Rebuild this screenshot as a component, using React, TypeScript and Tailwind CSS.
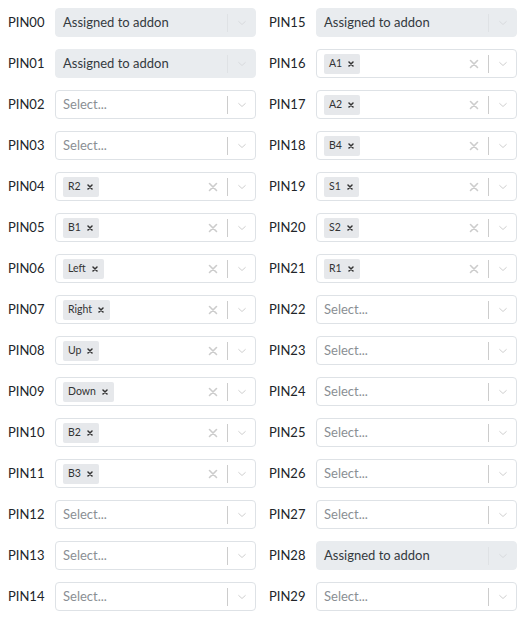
import React from "react";

type Pin = { name: string; kind: "addon" | "empty" | "tag"; tag?: string };

const left: Pin[] = [
  { name: "PIN00", kind: "addon" },
  { name: "PIN01", kind: "addon" },
  { name: "PIN02", kind: "empty" },
  { name: "PIN03", kind: "empty" },
  { name: "PIN04", kind: "tag", tag: "R2" },
  { name: "PIN05", kind: "tag", tag: "B1" },
  { name: "PIN06", kind: "tag", tag: "Left" },
  { name: "PIN07", kind: "tag", tag: "Right" },
  { name: "PIN08", kind: "tag", tag: "Up" },
  { name: "PIN09", kind: "tag", tag: "Down" },
  { name: "PIN10", kind: "tag", tag: "B2" },
  { name: "PIN11", kind: "tag", tag: "B3" },
  { name: "PIN12", kind: "empty" },
  { name: "PIN13", kind: "empty" },
  { name: "PIN14", kind: "empty" },
];

const right: Pin[] = [
  { name: "PIN15", kind: "addon" },
  { name: "PIN16", kind: "tag", tag: "A1" },
  { name: "PIN17", kind: "tag", tag: "A2" },
  { name: "PIN18", kind: "tag", tag: "B4" },
  { name: "PIN19", kind: "tag", tag: "S1" },
  { name: "PIN20", kind: "tag", tag: "S2" },
  { name: "PIN21", kind: "tag", tag: "R1" },
  { name: "PIN22", kind: "empty" },
  { name: "PIN23", kind: "empty" },
  { name: "PIN24", kind: "empty" },
  { name: "PIN25", kind: "empty" },
  { name: "PIN26", kind: "empty" },
  { name: "PIN27", kind: "empty" },
  { name: "PIN28", kind: "addon" },
  { name: "PIN29", kind: "empty" },
];

function Chevron({ faint }: { faint?: boolean }) {
  return (
    <svg width="12" height="12" viewBox="0 0 20 20" className={faint ? "text-[#d6d8db]" : "text-[#cccccc]"}>
      <path
        d="M4.5 7.5 L10 12.5 L15.5 7.5"
        fill="none"
        stroke="currentColor"
        strokeWidth="1.6"
        strokeLinecap="round"
        strokeLinejoin="round"
      />
    </svg>
  );
}

function Clear() {
  return (
    <svg width="10" height="10" viewBox="0 0 10 10" className="text-[#cccccc]">
      <path d="M1.5 1.5 L8.5 8.5 M8.5 1.5 L1.5 8.5" stroke="currentColor" strokeWidth="1.6" strokeLinecap="round" />
    </svg>
  );
}

function TagX() {
  return (
    <svg width="6" height="6" viewBox="0 0 6 6" className="text-[#333333]">
      <path d="M1 1 L5 5 M5 1 L1 5" stroke="currentColor" strokeWidth="1.5" strokeLinecap="round" />
    </svg>
  );
}

function Row({ pin }: { pin: Pin }) {
  const disabled = pin.kind === "addon";
  return (
    <div className="flex items-center h-[29px]">
      <div className="w-[48px] pl-px text-[13px] text-[#212529]">{pin.name}</div>
      <div
        className={
          disabled
            ? "flex-1 h-[29px] flex items-center rounded-[4px] border border-[#e9ecef] bg-[#e9ecef]"
            : "flex-1 h-[29px] flex items-center rounded-[4px] border border-[#dee2e6] bg-white"
        }
      >
        <div className="flex-1 flex items-center pl-[7px]">
          {pin.kind === "addon" && <span className="text-[13px] text-[#343a40]">Assigned to addon</span>}
          {pin.kind === "empty" && <span className="text-[13px] text-[#8a8f94]">Select...</span>}
          {pin.kind === "tag" && (
            <span className="flex items-center h-[20px] rounded-[2px] bg-[#e6e8eb] pl-[5px] pr-[6px] gap-[6px]">
              <span className="text-[10.5px] text-[#333]">{pin.tag}</span>
              <TagX />
            </span>
          )}
        </div>
        {pin.kind === "tag" && (
          <div className="flex items-center justify-center w-[28px]">
            <Clear />
          </div>
        )}
        <div className={disabled ? "w-px h-[18px] bg-[#dfe2e5]" : "w-px h-[18px] bg-[#cccccc]"} />
        <div className="w-[27px] flex items-center justify-center">
          <Chevron faint={disabled} />
        </div>
      </div>
    </div>
  );
}

export default function App() {
  return (
    <div
      className="w-[527px] h-[621px] bg-white pt-[8px] pl-[7px] pr-[10px]"
      style={{ fontFamily: 'Lato, "Noto Sans", sans-serif' }}
    >
      <div className="grid grid-cols-2 gap-x-[12px]">
        <div className="flex flex-col gap-[12px]">
          {left.map((p) => (
            <Row key={p.name} pin={p} />
          ))}
        </div>
        <div className="flex flex-col gap-[12px]">
          {right.map((p) => (
            <Row key={p.name} pin={p} />
          ))}
        </div>
      </div>
    </div>
  );
}
